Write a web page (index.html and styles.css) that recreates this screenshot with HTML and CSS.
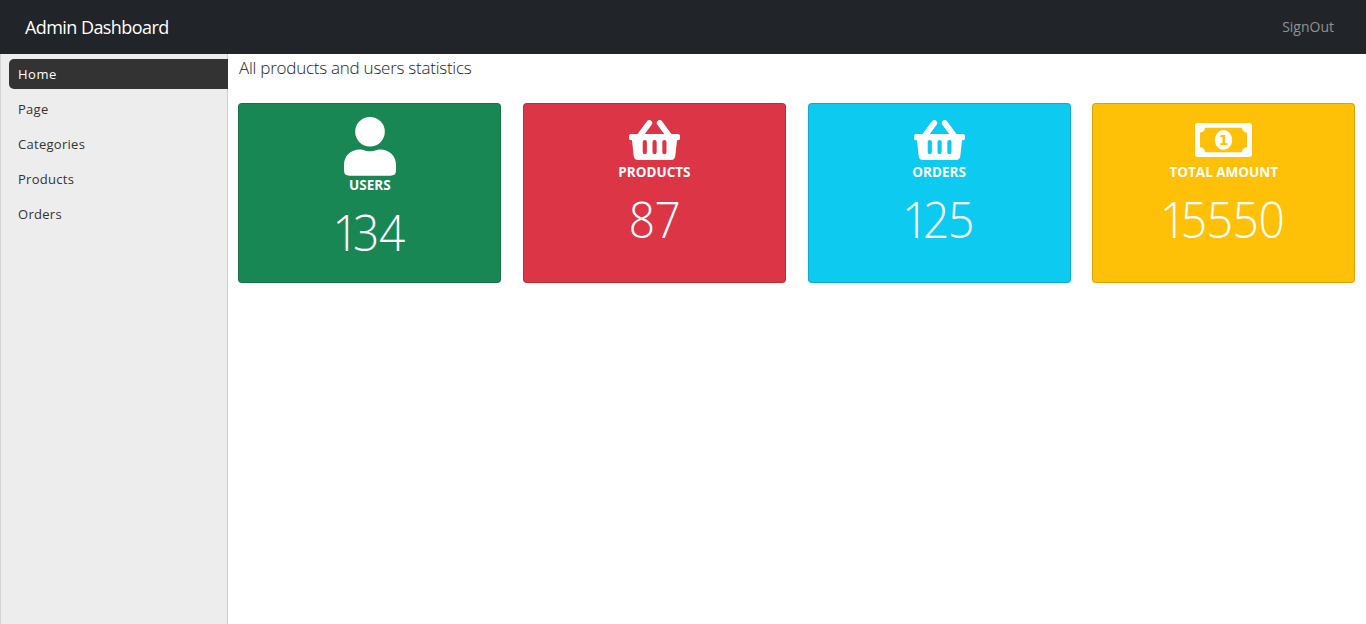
FILE: index.html
```html
<!DOCTYPE html>
<html lang="en">
<head>
<meta charset="utf-8">
<title>Admin Dashboard</title>
<link rel="stylesheet" href="styles.css">
</head>
<body>
<header class="topbar">
  <a class="brand">Admin Dashboard</a>
  <a class="signout">SignOut</a>
</header>
<div class="layout">
  <nav class="sidebar">
    <a class="nav-item active">Home</a>
    <a class="nav-item">Page</a>
    <a class="nav-item">Categories</a>
    <a class="nav-item">Products</a>
    <a class="nav-item">Orders</a>
  </nav>
  <main class="content">
    <h1 class="title">All products and users statistics</h1>
    <section class="cards">
      <article class="card green">
        <svg class="icon user" width="52" height="59" viewBox="0 0 52 59"><circle cx="26" cy="14.8" r="14.8"/><path d="M16 32.6C19 32.6 21 34.3 26 34.3S33 32.6 36 32.6C46 32.6 52 39.5 52 48V53.500Q52 58.700 46.500 58.700H5.500Q0 58.700 0 53.500V48C0 39.500 6 32.600 16 32.600Z"/></svg>
        <h2 class="label">USERS</h2>
        <p class="number"><span class="one">1</span>34</p>
      </article>
      <article class="card red">
        <svg class="icon basket" width="51" height="40" viewBox="0 0 51 40"><path class="handle" d="M20.300 3L10.700 16M30.700 3L40.300 16"/><path fill-rule="evenodd" d="M2 14H49Q51 14 51 16V18.500Q51 20.200 49 20.200H48L46.300 36Q45.800 40 42 40H9Q5.200 40 4.700 36L3 20.200H2Q0 20.200 0 18.500V16Q0 14 2 14ZM13.700 22V32Q13.700 34.200 15.800 34.200T17.900 32V22Q17.900 19.900 15.800 19.900T13.700 22ZM23.500 22V32Q23.500 34.200 25.600 34.200T27.700 32V22Q27.700 19.900 25.600 19.900T23.500 22ZM33.300 22V32Q33.300 34.200 35.400 34.200T37.500 32V22Q37.500 19.900 35.400 19.900T33.300 22Z"/></svg>
        <h2 class="label">PRODUCTS</h2>
        <p class="number">87</p>
      </article>
      <article class="card cyan">
        <svg class="icon basket" width="51" height="40" viewBox="0 0 51 40"><path class="handle" d="M20.300 3L10.700 16M30.700 3L40.300 16"/><path fill-rule="evenodd" d="M2 14H49Q51 14 51 16V18.500Q51 20.200 49 20.200H48L46.300 36Q45.800 40 42 40H9Q5.200 40 4.700 36L3 20.200H2Q0 20.200 0 18.500V16Q0 14 2 14ZM13.700 22V32Q13.700 34.200 15.800 34.200T17.900 32V22Q17.900 19.900 15.800 19.900T13.700 22ZM23.500 22V32Q23.500 34.200 25.600 34.200T27.700 32V22Q27.700 19.900 25.600 19.900T23.500 22ZM33.300 22V32Q33.300 34.200 35.400 34.200T37.500 32V22Q37.500 19.900 35.400 19.900T33.300 22Z"/></svg>
        <h2 class="label">ORDERS</h2>
        <p class="number"><span class="one">1</span>25</p>
      </article>
      <article class="card yellow">
        <svg class="icon money" width="57" height="34" viewBox="0 0 57 34"><path fill-rule="evenodd" d="M3 0H54Q57 0 57 3V31Q57 34 54 34H3Q0 34 0 31V3Q0 0 3 0ZM10 4.700A5 5 0 0 1 5 9.700V24.300A5 5 0 0 1 10 29.300H47A5 5 0 0 1 52 24.300V9.700A5 5 0 0 1 47 4.700Z"/><ellipse cx="28.500" cy="17" rx="8.700" ry="10"/><text class="coin" x="28.500" y="22.200" text-anchor="middle">1</text></svg>
        <h2 class="label">TOTAL AMOUNT</h2>
        <p class="number"><span class="one">1</span>5550</p>
      </article>
    </section>
  </main>
</div>
</body>
</html>
```
FILE: styles.css
```css
* { box-sizing: border-box; }
body {
  margin: 0;
  height: 100vh;
  display: flex;
  flex-direction: column;
  overflow: hidden;
  background: #fff;
  font-family: "Open Sans", "Noto Sans", sans-serif;
}
.topbar {
  flex: none;
  height: 54px;
  padding: 0 32px 0 25px;
  display: flex;
  align-items: center;
  justify-content: space-between;
  background: #212529;
}
.brand { color: #fff; font-size: 18px; letter-spacing: -0.57px; }
.signout { padding-bottom: 2px; color: #909294; font-size: 14px; }
.layout { flex: 1; display: flex; }
.sidebar {
  width: 228px;
  padding: 5px 0 0 8px;
  display: flex;
  flex-direction: column;
  gap: 5px;
  background: #ededed;
  border-left: 1px solid #d3d3d3;
  box-shadow: inset -1px 0 #d0d0d0;
}
.nav-item {
  height: 30px;
  padding-left: 9px;
  line-height: 30px;
  font-size: 13px;
  letter-spacing: 0.28px;
  color: #333;
}
.nav-item.active {
  background: #333;
  color: #fff;
  font-weight: 500;
  letter-spacing: 0.5px;
  border-radius: 5px 0 0 5px;
}
.content { flex: 1; padding: 0 11px 0 10px; }
.title {
  margin: 0;
  height: 49px;
  padding: 2px 0 0 1px;
  line-height: 24px;
  font-size: 17px;
  font-weight: 300;
  letter-spacing: -0.25px;
  color: #212529;
}
.cards {
  margin: 0 -0.3px 0 0.3px;
  display: grid;
  grid-template-columns: repeat(4, 263px);
  justify-content: space-between;
}
.card {
  height: 180px;
  display: flex;
  flex-direction: column;
  align-items: center;
  border: 1px solid rgba(0, 0, 0, 0.15);
  border-radius: 4px;
  color: #fff;
}
.green { background: #198754; }
.red { background: #dc3545; }
.cyan { background: #0dcaf0; }
.yellow { background: #ffc107; }
.icon { flex: none; fill: #fff; }
.user { margin-top: 13px; }
.basket { margin-top: 16px; }
.money { margin: 19px 0 3px; }
.handle { fill: none; stroke: #fff; stroke-width: 5.8; stroke-linecap: round; }
.coin { fill: #ffc107; font: bold 14px "DejaVu Sans", sans-serif; }
.label {
  margin: 0;
  height: 23px;
  line-height: 25px;
  font-size: 13.5px;
  font-weight: 700;
}
.user + .label { margin-top: -3px; }
.number {
  margin: 0;
  height: 72px;
  line-height: 72px;
  font-size: 49px;
  font-weight: 300;
  letter-spacing: -0.4px;
  transform: scaleX(0.94);
}
.one { letter-spacing: -6px; }
.number:has(.one) { padding-right: 3px; }
.cyan .number { padding-right: 4px; letter-spacing: -1.4px; }
```
